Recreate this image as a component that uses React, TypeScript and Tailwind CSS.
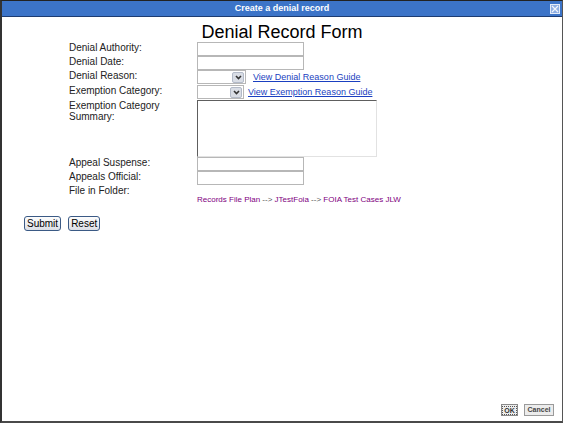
import React from 'react'

const font = { fontFamily: '"Liberation Sans", Arial, sans-serif' }

function TextBox({ w = 'w-[107px]' }: { w?: string }) {
  return <div className={`${w} h-[14px] border border-[#b7b7b7] bg-white`} />
}

function Select({ w }: { w: string }) {
  return (
    <div className={`${w} h-[14px] border border-[#b7b7b7] bg-white flex justify-end items-center pr-[1px]`}>
      <div className="w-[12px] h-[11px] rounded-[2px] bg-[#d9dde5] border border-[#b3bac8] flex items-center justify-center">
        <svg width="7" height="5" viewBox="0 0 7 5">
          <path d="M1 1 L3.5 3.5 L6 1" stroke="#333" strokeWidth="1.6" fill="none" />
        </svg>
      </div>
    </div>
  )
}

function Label({ children }: { children: React.ReactNode }) {
  return <div className="w-[128px] text-[10px] leading-[12px] text-[#222] pb-[2px]">{children}</div>
}

export default function App() {
  return (
    <div
      style={font}
      className="w-[563px] h-[423px] bg-white flex flex-col border-t border-t-[#222] border-l-2 border-l-[#333] border-r border-r-[#555] border-b-2 border-b-[#4a4a4a]"
    >
      {/* title bar */}
      <div className="h-[16px] bg-[#3c74c8] border-b border-b-[#1d3c72] flex items-center relative">
        <div className="w-full text-center text-white font-bold text-[9px] leading-[15px]">Create a denial record</div>
        <div className="absolute right-[2px] top-[3px] w-[10px] h-[10px] bg-[#8eaee3] border border-[#e3ebf8] flex items-center justify-center">
          <svg width="8" height="8" viewBox="0 0 8 8">
            <path d="M1 1 L7 7 M7 1 L1 7" stroke="#f3f6fc" strokeWidth="1.2" />
          </svg>
        </div>
      </div>

      <div className="flex-1 flex flex-col">
        <h1 className="text-center text-[18px] leading-[20px] text-black pt-[5px]">Denial Record Form</h1>

        <div className="pl-[67px] flex flex-col">
          <div className="flex items-center h-[14px]">
            <Label>Denial Authority:</Label>
            <TextBox />
          </div>
          <div className="flex items-center h-[14px]">
            <Label>Denial Date:</Label>
            <TextBox />
          </div>
          <div className="flex items-center h-[14px]">
            <Label>Denial Reason:</Label>
            <Select w="w-[49px]" />
            <a href="#" className="ml-[7px] text-[9px] leading-[12px] text-[#1a3fc0] underline">View Denial Reason Guide</a>
          </div>
          <div className="flex items-center h-[14px] mt-[1px]">
            <Label>Exemption Category:</Label>
            <Select w="w-[47px]" />
            <a href="#" className="ml-[4px] text-[9px] leading-[12px] text-[#1a3fc0] underline">View Exemption Reason Guide</a>
          </div>
          <div className="flex items-start mt-[1px]">
            <div className="w-[128px] text-[10px] leading-[11px] text-[#222]">
              Exemption Category
              <br />
              Summary:
            </div>
            <div className="w-[180px] h-[57px] bg-white border border-t-[#5e5e5e] border-l-[#5e5e5e] border-r-[#e2e2e2] border-b-[#e2e2e2]" />
          </div>
          <div className="flex items-center h-[14px]">
            <Label>Appeal Suspense:</Label>
            <TextBox />
          </div>
          <div className="flex items-center h-[14px]">
            <Label>Appeals Official:</Label>
            <TextBox />
          </div>
          <div className="flex items-start">
            <div className="w-[128px] text-[10px] leading-[12px] text-[#222]">File in Folder:</div>
            <div className="pt-[9px] text-[8px] leading-[12px] text-[#555]">
              <span className="text-[#800080]">Records File Plan</span> --&gt;{' '}
              <span className="text-[#800080]">JTestFoia</span> --&gt;{' '}
              <span className="text-[#800080]">FOIA Test Cases JLW</span>
            </div>
          </div>
        </div>

        <div className="flex gap-[7px] pl-[22px] mt-[10px]">
          <button className="h-[15px] px-[2px] text-[10px] leading-[12px] text-black rounded-[3px] border border-[#3b5a85] bg-gradient-to-b from-[#fdfdfd] to-[#dcdfe6]">
            Submit
          </button>
          <button className="h-[15px] px-[2px] text-[10px] leading-[12px] text-black rounded-[3px] border border-[#3b5a85] bg-gradient-to-b from-[#fdfdfd] to-[#dcdfe6]">
            Reset
          </button>
        </div>

        <div className="mt-auto flex justify-end gap-[6px] pr-[8px] pb-[5px]">
          <div className="w-[17px] h-[12px] bg-[#ececec] border border-[#8a8a8a] flex items-center justify-center">
            <div className="border border-dotted border-[#555] px-[1px] text-[7px] leading-[7px] font-bold text-[#333]">OK</div>
          </div>
          <div className="w-[30px] h-[12px] bg-[#ececec] border border-[#9a9a9a] flex items-center justify-center text-[7px] leading-[8px] font-bold text-[#444]">
            Cancel
          </div>
        </div>
      </div>
    </div>
  )
}
